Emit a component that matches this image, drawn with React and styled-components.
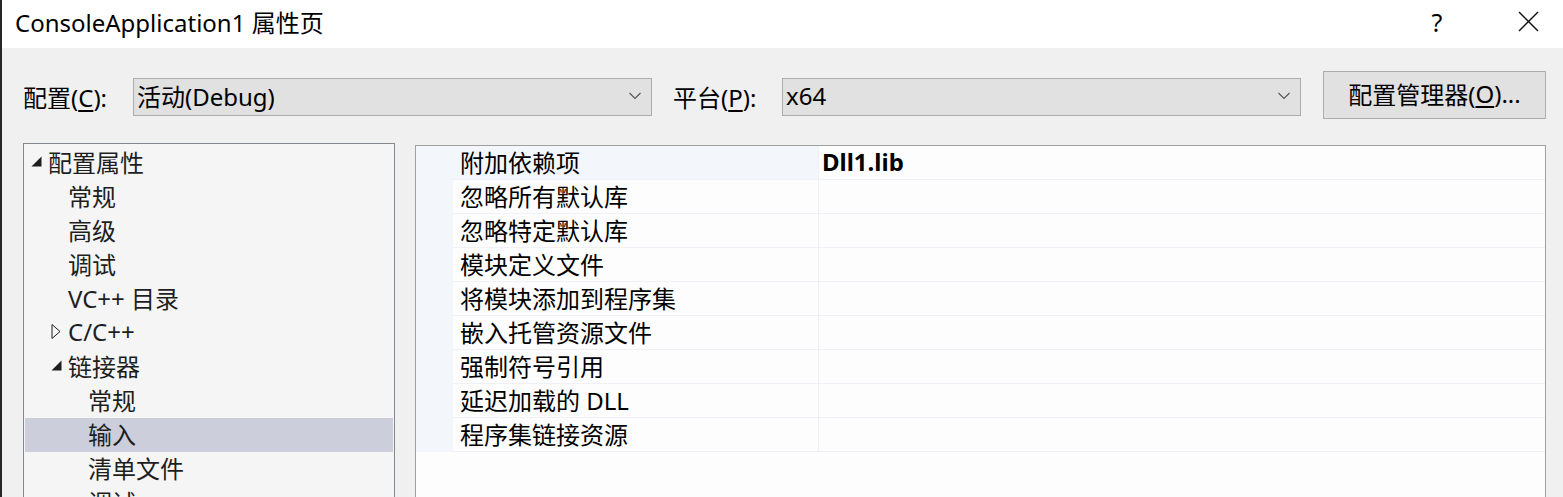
import React from 'react'
import styled, { createGlobalStyle } from 'styled-components'

const GlobalStyle = createGlobalStyle`
    html, body {
        margin: 0;
        padding: 0;
        background: #f0f0f0;
    }
    * {
        box-sizing: border-box;
    }
`

const Window = styled.div`
    width: 1563px;
    height: 497px;
    overflow: hidden;
    display: flex;
    flex-direction: column;
    border-left: 2px solid #262626;
    font-family: 'Noto Sans', 'Noto Sans CJK SC', sans-serif;
    font-size: 24px;
    color: #000;
`

const TitleBar = styled.div`
    height: 48px;
    flex: none;
    display: flex;
    align-items: center;
    padding: 0 12px 5px 13px;
    background: #fff;
`

const Title = styled.div`
    flex: 1;
`

const TitleButton = styled.div`
    width: 46px;
    height: 40px;
    display: flex;
    align-items: center;
    justify-content: center;
    margin-left: ${(props) => props.$gap || 0}px;
    font-size: 25px;
`

const Body = styled.div`
    flex: 1;
    min-height: 0;
    display: flex;
    flex-direction: column;
    background: #f0f0f0;
    padding: 23px 17px 0 21px;
`

const ConfigRow = styled.div`
    display: flex;
    align-items: center;
    height: 48px;
    flex: none;
`

const FieldLabel = styled.div`
    width: ${(props) => props.$width}px;
    margin-left: ${(props) => props.$gap || 0}px;
    margin-top: 2px;
    flex: none;
    u {
        text-underline-offset: 3px;
    }
`

const Combo = styled.div`
    width: 519px;
    height: 38px;
    margin-top: 4px;
    flex: none;
    display: flex;
    align-items: center;
    justify-content: space-between;
    padding: 0 10px 3px 3px;
    background: #e1e1e1;
    border: 1px solid #adadad;
`

const ManagerButton = styled.div`
    width: 223px;
    height: 48px;
    margin-left: 22px;
    flex: none;
    display: flex;
    align-items: center;
    justify-content: center;
    padding-bottom: 3px;
    background: #e1e1e1;
    border: 1px solid #adadad;
    u {
        text-underline-offset: 3px;
    }
`

const Panels = styled.div`
    flex: 1;
    min-height: 0;
    display: flex;
    gap: 20px;
    margin-top: 24px;
`

const Tree = styled.div`
    width: 372px;
    flex: none;
    background: #f5f5f5;
    border: 1px solid #828790;
    border-bottom: none;
    padding: 2px 1px 0;
    color: #1e1e1e;
`

const TreeRow = styled.div`
    height: 34px;
    display: flex;
    align-items: center;
    padding-left: ${(props) => 6 + props.$level * 20}px;
    padding-bottom: 3px;
    background: ${(props) => (props.$selected ? '#cccedb' : 'transparent')};
    white-space: nowrap;
`

const Expander = styled.div`
    width: 17px;
    flex: none;
    display: flex;
    align-items: center;
    margin-top: -1px;
`

const Grid = styled.div`
    flex: 1;
    margin-top: 2px;
    background: #fdfdfd;
    border: 1px solid #a0a0a0;
    border-bottom: none;
`

const GridRow = styled.div`
    height: 34px;
    display: flex;
`

const Gutter = styled.div`
    width: 37px;
    flex: none;
    background: #f3f6fb;
`

const NameCell = styled.div`
    width: 366px;
    flex: none;
    display: flex;
    align-items: center;
    padding: 0 0 3px 7px;
    background: ${(props) => (props.$selected ? '#f3f6fb' : '#fdfdfd')};
    border-bottom: 1px solid #f0f1f6;
    border-right: 1px solid #eef0f5;
    white-space: nowrap;
`

const ValueCell = styled.div`
    flex: 1;
    display: flex;
    align-items: center;
    padding: 0 0 3px 3px;
    font-weight: 700;
    border-bottom: 1px solid #f0f1f6;
`

const OpenArrow = () => (
    <svg width='11' height='11' viewBox='0 0 11 11'>
        <polygon points='10.5,0.5 10.5,10.5 0.5,10.5' fill='#1e1e1e' />
    </svg>
)

const ClosedArrow = () => (
    <svg width='11' height='15' viewBox='0 0 11 15'>
        <polygon
            points='1,0.5 9,7.5 1,14.5'
            fill='none'
            stroke='#1e1e1e'
            strokeWidth='1'
        />
    </svg>
)

const Chevron = () => (
    <svg width='12' height='8' viewBox='0 0 12 8'>
        <polyline
            points='0.5,1 6,6.5 11.5,1'
            fill='none'
            stroke='#555'
            strokeWidth='1.1'
        />
    </svg>
)

const CloseIcon = () => (
    <svg width='21' height='21' viewBox='0 0 21 21'>
        <line x1='1' y1='1' x2='20' y2='20' stroke='#111' strokeWidth='1.4' />
        <line x1='20' y1='1' x2='1' y2='20' stroke='#111' strokeWidth='1.4' />
    </svg>
)

const treeItems = [
    { label: '配置属性', level: 0, arrow: 'open' },
    { label: '常规', level: 1 },
    { label: '高级', level: 1 },
    { label: '调试', level: 1 },
    { label: 'VC++ 目录', level: 1 },
    { label: 'C/C++', level: 1, arrow: 'closed' },
    { label: '链接器', level: 1, arrow: 'open' },
    { label: '常规', level: 2 },
    { label: '输入', level: 2, selected: true },
    { label: '清单文件', level: 2 },
    { label: '调试', level: 2 },
]

const properties = [
    { name: '附加依赖项', value: 'Dll1.lib', selected: true },
    { name: '忽略所有默认库', value: '' },
    { name: '忽略特定默认库', value: '' },
    { name: '模块定义文件', value: '' },
    { name: '将模块添加到程序集', value: '' },
    { name: '嵌入托管资源文件', value: '' },
    { name: '强制符号引用', value: '' },
    { name: '延迟加载的 DLL', value: '' },
    { name: '程序集链接资源', value: '' },
]

const App = () => {
    return (
        <>
            <GlobalStyle />
            <Window>
                <TitleBar>
                    <Title>ConsoleApplication1 属性页</Title>
                    <TitleButton>?</TitleButton>
                    <TitleButton $gap={45}>
                        <CloseIcon />
                    </TitleButton>
                </TitleBar>
                <Body>
                    <ConfigRow>
                        <FieldLabel $width={110}>
                            配置(<u>C</u>):
                        </FieldLabel>
                        <Combo>
                            <span>活动(Debug)</span>
                            <Chevron />
                        </Combo>
                        <FieldLabel $width={109} $gap={21}>
                            平台(<u>P</u>):
                        </FieldLabel>
                        <Combo>
                            <span>x64</span>
                            <Chevron />
                        </Combo>
                        <ManagerButton>
                            配置管理器(<u>O</u>)...
                        </ManagerButton>
                    </ConfigRow>
                    <Panels>
                        <Tree>
                            {treeItems.map((item, i) => (
                                <TreeRow
                                    key={i}
                                    $level={item.level}
                                    $selected={item.selected}
                                >
                                    <Expander>
                                        {item.arrow === 'open' && <OpenArrow />}
                                        {item.arrow === 'closed' && (
                                            <ClosedArrow />
                                        )}
                                    </Expander>
                                    {item.label}
                                </TreeRow>
                            ))}
                        </Tree>
                        <Grid>
                            {properties.map((prop, i) => (
                                <GridRow key={i}>
                                    <Gutter />
                                    <NameCell $selected={prop.selected}>
                                        {prop.name}
                                    </NameCell>
                                    <ValueCell>{prop.value}</ValueCell>
                                </GridRow>
                            ))}
                        </Grid>
                    </Panels>
                </Body>
            </Window>
        </>
    )
}

export default App
